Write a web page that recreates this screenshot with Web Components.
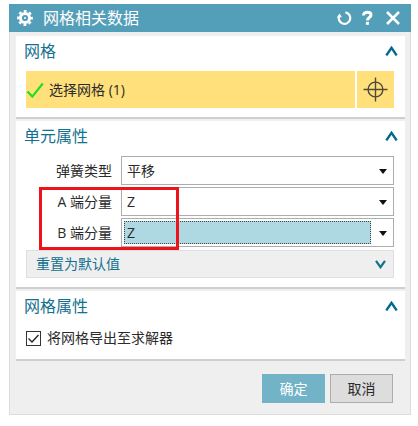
<!DOCTYPE html>
<html lang="zh-CN">
<head>
<meta charset="utf-8">
<meta name="viewport" content="width=device-width, initial-scale=1">
<title>网格相关数据</title>
<style>
  body {
    margin: 0;
    padding: 4px 7px 11px 9px;
    background: #fff;
    color: #2b2b2b;
    font: 14px/20px "Open Sans", "Noto Sans CJK SC", sans-serif;
  }
</style>
</head>
<body>
<nx-dialog heading="网格相关数据">
  <nx-group heading="网格">
    <nx-picker label="选择网格 (1)"></nx-picker>
  </nx-group>
  <nx-group heading="单元属性">
    <nx-select label="弹簧类型" value="平移"></nx-select>
    <nx-marked>
      <nx-select label="A 端分量" value="Z"></nx-select>
      <nx-select label="B 端分量" value="Z" active></nx-select>
    </nx-marked>
    <nx-expander label="重置为默认值"></nx-expander>
  </nx-group>
  <nx-group heading="网格属性">
    <nx-check label="将网格导出至求解器" checked></nx-check>
  </nx-group>
  <nx-button slot="actions" label="确定" primary></nx-button>
  <nx-button slot="actions" label="取消"></nx-button>
</nx-dialog>

<script>
class NxElement extends HTMLElement {
  constructor() {
    super();
    this.attachShadow({ mode: "open" });
  }

  connectedCallback() {
    if (this.shadowRoot.childNodes.length) {
      return;
    }
    const template = document.createElement("template");
    template.innerHTML = this.render();
    this.shadowRoot.appendChild(template.content.cloneNode(true));
  }

  attr(name) {
    return this.getAttribute(name) || "";
  }
}

class NxDialog extends NxElement {
  render() {
    return `
      <style>
        :host { display: block; background: #efefef; }
        header {
          display: flex;
          align-items: center;
          height: 28px;
          padding: 0 9px 0 8px;
          background: #539eb8;
          color: #fff;
        }
        h1 {
          flex: 1;
          margin: 0 0 0 10px;
          font-size: 16px;
          line-height: 28px;
          font-weight: 400;
        }
        svg { display: block; }
        nav { display: flex; gap: 7px; }
        nav button {
          display: block;
          padding: 0;
          border: 0;
          background: none;
          color: inherit;
        }
        .body {
          border: 1px solid #dcdcdc;
          border-top: 0;
          padding: 4px 5px 11px 6px;
        }
        .groups { display: flex; flex-direction: column; gap: 2px; }
        footer {
          display: flex;
          justify-content: flex-end;
          gap: 5px;
          padding: 13px 12px 0;
        }
      </style>
      <header>
        <svg width="16" height="16" viewBox="0 0 16 16" fill="none" stroke="#fff" aria-hidden="true">
          <circle cx="8" cy="8" r="4.6" stroke-width="3"/>
          <circle cx="8" cy="8" r="6.8" stroke-width="2.2" stroke-dasharray="2.9 2.44" stroke-dashoffset="1.45"/>
          <circle cx="8" cy="8" r="1" fill="#fff" stroke="none"/>
        </svg>
        <h1>${this.attr("heading")}</h1>
        <nav>
          <button type="button" aria-label="重置">
            <svg width="18" height="18" viewBox="0 0 18 18" fill="none" stroke="#fff" stroke-width="2.2">
              <path d="M11.4 3.3A5.8 5.8 0 1 1 5.2 6.6"/>
              <path d="M2.8 8.4 5.6 4.4 8 8.2z" fill="#fff" stroke="none"/>
            </svg>
          </button>
          <button type="button" aria-label="帮助">
            <svg width="18" height="18" viewBox="0 0 18 18" fill="none" stroke="#fff" stroke-width="3">
              <path d="M4.5 6.6C4.5 3.9 6.4 3.3 8.3 3.3c2.3 0 3.7 1 3.7 2.7 0 2.5-3.6 2.4-3.6 5.4"/>
              <path d="M8.4 12.9v2.9"/>
            </svg>
          </button>
          <button type="button" aria-label="关闭">
            <svg width="18" height="18" viewBox="0 0 18 18" fill="none" stroke="#fff" stroke-width="2.5">
              <path d="M3 3 15 15M15 3 3 15"/>
            </svg>
          </button>
        </nav>
      </header>
      <div class="body">
        <div class="groups"><slot></slot></div>
        <footer><slot name="actions"></slot></footer>
      </div>
    `;
  }
}

class NxGroup extends NxElement {
  render() {
    return `
      <style>
        :host {
          display: block;
          padding: 0 11px 9px 10px;
          border-bottom: 2px solid #cfcfcf;
          background: #fff;
        }
        h2 {
          display: flex;
          align-items: center;
          justify-content: space-between;
          margin: 0 -4px 5px -2px;
          color: #14708f;
          font-size: 16px;
          line-height: 30px;
          font-weight: 400;
        }
        svg { display: block; }
        .content { display: flex; flex-direction: column; gap: 2px; }
      </style>
      <h2>
        ${this.attr("heading")}
        <svg width="13" height="10" viewBox="0 0 13 10" fill="none" stroke="#006a8c" stroke-width="2.4" aria-hidden="true">
          <path d="M1.3 9.4 6.5 1.8 11.7 9.4"/>
        </svg>
      </h2>
      <div class="content"><slot></slot></div>
    `;
  }
}

class NxPicker extends NxElement {
  render() {
    return `
      <style>
        :host { display: flex; gap: 2px; height: 37px; }
        button {
          display: flex;
          align-items: center;
          padding: 0;
          border: 0;
          background: #ffe07a;
          color: inherit;
          font: inherit;
        }
        .pick { flex: 1; gap: 5px; }
        .target { flex: none; width: 37px; justify-content: center; }
      </style>
      <button class="pick" type="button">
        <svg width="18" height="18" viewBox="0 0 18 18" fill="none" stroke="#1fe01f" stroke-width="2.2" aria-hidden="true">
          <path d="M1.5 10.5 6.3 15.6 16.8 2.5"/>
        </svg>
        ${this.attr("label")}
      </button>
      <button class="target" type="button" aria-label="选择">
        <svg width="25" height="25" viewBox="0 0 25 25" fill="none" stroke="#4f4b3c" stroke-width="1.4">
          <circle cx="12.5" cy="12.5" r="7.4"/>
          <path d="M12.5 .5v24M.5 12.5h24"/>
        </svg>
      </button>
    `;
  }
}

class NxSelect extends NxElement {
  render() {
    return `
      <style>
        :host { display: flex; align-items: center; gap: 9px; }
        label { flex: none; width: 86px; text-align: right; }
        .box {
          position: relative;
          flex: 1;
          border: 1px solid #adadad;
          background: #fff;
        }
        .fill {
          position: absolute;
          inset: 2px 22px 2px 2px;
          border: 1px dotted #444;
          background: #aed8e2;
        }
        select {
          position: relative;
          display: block;
          width: 100%;
          height: 27px;
          padding: 0 24px 0 5px;
          border: 0;
          outline: 0;
          appearance: none;
          background: none;
          color: inherit;
          font: inherit;
        }
        svg { position: absolute; right: 6px; top: 12px; pointer-events: none; }
      </style>
      <label for="field">${this.attr("label")}</label>
      <div class="box">
        ${this.hasAttribute("active") ? '<span class="fill"></span>' : ""}
        <select id="field"><option>${this.attr("value")}</option></select>
        <svg width="8" height="5" viewBox="0 0 8 5" aria-hidden="true"><path d="M0 0h8L4 5z" fill="#111"/></svg>
      </div>
    `;
  }
}

// Red frame drawn over the leading part of the rows it wraps.
class NxMarked extends NxElement {
  render() {
    return `
      <style>
        :host { position: relative; display: flex; flex-direction: column; gap: 2px; }
        .frame {
          position: absolute;
          inset: 0 auto -3px 13px;
          width: 134px;
          border: 3px solid #ec131b;
          pointer-events: none;
        }
      </style>
      <slot></slot>
      <span class="frame"></span>
    `;
  }
}

class NxExpander extends NxElement {
  render() {
    return `
      <style>
        :host { display: block; margin-top: 1px; }
        button {
          display: flex;
          align-items: center;
          justify-content: space-between;
          width: 100%;
          height: 28px;
          padding: 0 7px 0 9px;
          border: 1px solid #dedede;
          background: #efefef;
          color: #14708f;
          font: inherit;
        }
      </style>
      <button type="button">
        ${this.attr("label")}
        <svg width="11" height="9" viewBox="0 0 11 9" fill="none" stroke="#14708f" stroke-width="2.2" aria-hidden="true">
          <path d="M1 .8 5.5 7.2 10 .8"/>
        </svg>
      </button>
    `;
  }
}

class NxCheck extends NxElement {
  render() {
    return `
      <style>
        :host { display: block; }
        label { display: flex; align-items: center; gap: 6px; height: 24px; }
        input {
          width: 15px;
          height: 15px;
          margin: 0;
          border: 1px solid #333;
          appearance: none;
          background: #fff;
        }
        input:checked {
          background: url("data:image/svg+xml,%3Csvg xmlns='http://www.w3.org/2000/svg' viewBox='0 0 13 13'%3E%3Cpath d='M1.5 6.5 5 10 11.5 3' fill='none' stroke='%23222' stroke-width='1.3'/%3E%3C/svg%3E");
        }
      </style>
      <label>
        <input type="checkbox" ${this.hasAttribute("checked") ? "checked" : ""}>
        ${this.attr("label")}
      </label>
    `;
  }
}

class NxButton extends NxElement {
  render() {
    return `
      <style>
        :host { display: block; }
        button {
          display: block;
          width: 63px;
          height: 29px;
          padding: 0;
          border: 1px solid #adadad;
          background: #dddddd;
          color: inherit;
          font: inherit;
        }
        :host([primary]) button {
          border-color: #72b3c8;
          background: #72b3c8;
          color: #fff;
        }
      </style>
      <button type="button">${this.attr("label")}</button>
    `;
  }
}

customElements.define("nx-dialog", NxDialog);
customElements.define("nx-group", NxGroup);
customElements.define("nx-picker", NxPicker);
customElements.define("nx-select", NxSelect);
customElements.define("nx-marked", NxMarked);
customElements.define("nx-expander", NxExpander);
customElements.define("nx-check", NxCheck);
customElements.define("nx-button", NxButton);
</script>
</body>
</html>
